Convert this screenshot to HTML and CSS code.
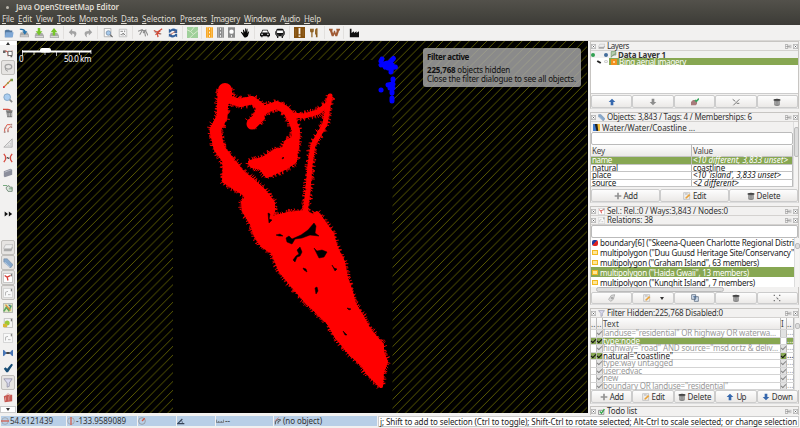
FILE: index.html
```html
<!DOCTYPE html>
<html lang="en">
<head>
<meta charset="utf-8">
<title>Java OpenStreetMap Editor</title>
<link rel="stylesheet" href="styles.css">
</head>
<body>
<svg class="sprite" xmlns="http://www.w3.org/2000/svg">
<defs>
<symbol id="open" viewBox="0 0 12 12"><path d="M1 3l2-1h3l1 1h3v8H1z" fill="#54789f"/><path d="M2 5h9.500l-1 6H1z" fill="#7fa8d6"/></symbol>
<symbol id="save" viewBox="0 0 12 12"><path d="M2 5h8l2 3v3H1V8z" fill="#aaa"/><path d="M2 9h9v1H2z" fill="#e8e8e8"/><path d="M1 1q6-1 7 3h2L7 8 4 4h2Q5 2 1 2z" fill="#2774ad"/></symbol>
<symbol id="down" viewBox="0 0 12 12"><path d="M2 6h8l2 3v3H1V9z" fill="#aaa"/><path d="M2 10h9v1H2z" fill="#eee"/><path d="M4.500 0h3v4H10L6 9 2 4h2.500z" fill="#77c52b"/></symbol>
<symbol id="up" viewBox="0 0 12 12"><path d="M2 6h8l2 3v3H1V9z" fill="#aaa"/><path d="M2 10h9v1H2z" fill="#eee"/><path d="M4.500 9h3V5H10L6 0 2 5h2.500z" fill="#77c52b"/></symbol>
<symbol id="undo" viewBox="0 0 12 12"><path d="M1 5l4-4v2.500q6 0 5 4-.5 3-3 4 2-5-2-5V9z" fill="#a3a3a3"/></symbol>
<symbol id="redo" viewBox="0 0 12 12"><path d="M11 5L7 1v2.500q-6 0-5 4 .5 3 3 4-2-5 2-5V9z" fill="#a3a3a3"/></symbol>
<symbol id="find" viewBox="0 0 12 12"><path d="M1.500.5h8v10h-8z" fill="#f9f9f9" stroke="#aaa"/><circle cx="6.500" cy="6" r="2.700" fill="#a6c8e9" stroke="#7892ad"/><path d="M8.500 8l3 3" stroke="#666" stroke-width="1.500"/></symbol>
<symbol id="prefs" viewBox="0 0 12 12"><path d="M1.500 1.500h9v9h-9z" fill="#f8f8f8" stroke="#bbb"/><path d="M3 4h3M8 3v2M3 8h2l1-2 3 3M8 7l-2 2" stroke="#777" fill="none"/></symbol>
<symbol id="ways" viewBox="0 0 12 12"><path d="M0 4l5-2 3 3 1 5M2 8l3-5 4 0 3 6M6 6l4-4" stroke="#8d8d8d" fill="none" stroke-width="1.300"/></symbol>
<symbol id="redways" viewBox="0 0 12 12"><path d="M1 3l4 2 1 6M5 5l6-4M3 8l6-5M5 6l4 1" stroke="#cf4b38" fill="none" stroke-width="1.500"/><path d="M2 5h2M8 7h2" stroke="#777"/></symbol>
<symbol id="sync" viewBox="0 0 12 12"><path d="M1 6V1l2 1q4-3 7 0l1-1v5H7l1-2q-3-2-5 1zM11 7v4l-2-1q-4 3-7 0l-1 1V7h4L4 8q3 2 5-1z" fill="#315f9c"/><path d="M3 8l6-4" stroke="#d46b52"/></symbol>
<symbol id="mapicon" viewBox="0 0 12 12"><path d="M0 0h12v12H0z" fill="#9fd09a"/><path d="M0 3l4 2 4-5M4 5l3 3 5-4M7 8l-4 4" stroke="#dcebd0" stroke-width="1" fill="none"/></symbol>
<symbol id="road" viewBox="0 0 8 12"><path d="M0 0h8v12H0z" fill="currentColor"/><path d="M1.500 0v12M6.500 0v12" stroke="#fff" stroke-opacity=".5" stroke-width=".7"/><path d="M4 1v2M4 5v2M4 9v2" stroke="#fff" stroke-width="1"/></symbol>
<symbol id="roaddot" viewBox="0 0 8 12"><path d="M0 0h8v12H0z" fill="#8c8c8c"/><circle cx="4" cy="5" r="2.500" fill="#fff"/><path d="M4 9v2" stroke="#fff"/></symbol>
<symbol id="hand" viewBox="0 0 12 12"><path d="M1 5l1-.5 2 2L3.500 2h1L6 5V.5h1V5l1-4h1v5l1.500-2 .5.500-1.500 5Q8 12 5 11z" fill="#080808"/></symbol>
<symbol id="car" viewBox="0 0 12 12"><path d="M3 2h6l1.500 3.500L12 7v3h-1.500v1H9v-1H3v1H1.500v-1H0V7l1.500-1.500z" fill="#111"/><path d="M3.500 3h5l1 2.500h-7zM1.500 7h2v1h-2zM8.500 7h2v1h-2z" fill="#fff"/></symbol>
<symbol id="bus" viewBox="0 0 12 12"><path d="M3 1h6l1.500 1v8H9.500v2H8v-2H4v2H2.500v-2h-1V2z" fill="#111"/><path d="M2.500 3h7v3h-7zM3 8h1v1H3zM8 8h1v1H8z" fill="#fff"/><path d="M0 4h1v4H0zM11 4h1v4h-1z" fill="#333"/></symbol>
<symbol id="info" viewBox="0 0 12 12"><path d="M0 0h12v12H0z" fill="#84500e"/><path d="M5 1h2v7H5zM5 9h2v2H5zM2 2v8M10 2v8" fill="#fff" stroke="#b68b52" stroke-width=".4"/></symbol>
<symbol id="fork" viewBox="0 0 12 12"><path d="M2 1v3q0 1 1.500 1T5 4V1M3.500 1v10M9 11V7H8V3q0-2 1.500-2V11" stroke="#8b5c1d" stroke-width="1.400" fill="none"/></symbol>
<symbol id="castle" viewBox="0 0 12 12"><path d="M0 2h4v1.500L3.500 4 4.500 7 5.500 4h1L7.500 7l1-3L8 3.500V2h4v1.500l-1 .5-2 6H7L6 7.500 5 10H3L1 4 0 3.500z" fill="#a05a34"/></symbol>
<symbol id="factory" viewBox="0 0 12 12"><path d="M1 1h2v5l3-2v2l3-2v2l3-2v7H1z" fill="#111"/></symbol>
<symbol id="select" viewBox="0 0 12 12"><path d="M1 5q3-3 5 0t5-2M2 3l4 2v5" stroke="#d35c4e" fill="none"/><path d="M6 4h5v5H6z" fill="#fff" stroke="#555"/><path d="M0 3h3v3H0zM9 9h2v2H9z" fill="#666"/></symbol>
<symbol id="lasso" viewBox="0 0 12 12"><ellipse cx="6.500" cy="4.500" rx="4" ry="2.800" fill="none" stroke="#a2a2a2" stroke-width="1.500"/><path d="M3 6q-1 3 3 4" stroke="#999" fill="none"/></symbol>
<symbol id="draw" viewBox="0 0 12 12"><path d="M1 11l9-9" stroke="#d27b30" stroke-width="1.500"/><path d="M9 1h3v3H9zM5 5h2v2H5z" fill="#7d9d47"/><path d="M0 10h2v2H0z" fill="#d34"/></symbol>
<symbol id="lens" viewBox="0 0 12 12"><circle cx="5" cy="5" r="4" fill="#a9cdf0" stroke="#7c9fbf"/><path d="M8 8l3 3" stroke="#8a8a8a" stroke-width="2"/></symbol>
<symbol id="datalayer" viewBox="0 0 12 12"><path d="M2 1h8v6H5l-3 4z" fill="#b5cfae" stroke="#5d8a56"/><path d="M4 9l5-5" stroke="#666"/></symbol>
<symbol id="delete" viewBox="0 0 12 12"><path d="M0 1.500h6l3 1" stroke="#d54c3d" stroke-width="1.500"/><path d="M4 4h7v7H5z" fill="#777"/><path d="M3.500 3.500h8" stroke="#444"/><path d="M6 6v4M8 6v4M10 6v4" stroke="#ccc"/></symbol>
<symbol id="parallel" viewBox="0 0 12 12"><path d="M2 11V7l3-5h4M6 10V7l3-3" stroke="#da5a49" fill="none" stroke-width="1.200"/><path d="M1 10h2v2H1zM9 1h2v2H9zM9 4h2v2H9zM5 9h2v2H5zM2 5h2v2H2z" fill="#b08f8b"/></symbol>
<symbol id="triangle" viewBox="0 0 12 12"><path d="M1 11L11 1v10z" fill="#e4e4e4" stroke="#aaa"/><path d="M6 9l3-3v3z" fill="#fff" stroke="#bbb" stroke-width=".6"/></symbol>
<symbol id="merge" viewBox="0 0 12 12"><path d="M1 1l2 3v4l-2 3M11 1L9 4v4l2 3" stroke="#d74b40" fill="none" stroke-width="1.500"/><path d="M4 6h4M5 5l2 2" stroke="#333"/></symbol>
<symbol id="extrude" viewBox="0 0 12 12"><path d="M1 4l8-3 2 1v6l-9 3-1-1z" fill="#8b8e9b"/><path d="M2 5l8-3" stroke="#c0c3cd"/></symbol>
<symbol id="improve" viewBox="0 0 12 12"><path d="M4 5l3-2 1 2h3v5H6L4 7z" fill="#e0e8e2" stroke="#66806b"/><path d="M0 3h5M7 7h4" stroke="#5d9c68"/></symbol>
<symbol id="more" viewBox="0 0 12 12"><path d="M2 3l4 3-4 3zM7 3l4 3-4 3z" fill="#111"/></symbol>
<symbol id="layers" viewBox="0 0 12 12"><path d="M1 8l2-3h9l-2 5H1z" fill="#aaa"/><path d="M1 6l2-4h9l-2 5H1z" fill="#eee" stroke="#aaa" stroke-width=".7"/></symbol>
<symbol id="tag" viewBox="0 0 12 12"><path d="M1 1h4l7 7-3 4L1 5z" fill="#87a8cb" stroke="#657d98" stroke-width=".6"/><path d="M2 5l6 6" stroke="#dce7f3"/></symbol>
<symbol id="winred" viewBox="0 0 12 12"><path d="M.5.5h11v11H.5z" fill="#fff" stroke="#bbb"/><path d="M2 3l3 2 1 4M5 5l4-2" stroke="#d63c35" fill="none" stroke-width="1.500"/><path d="M10 1v3" stroke="#444"/></symbol>
<symbol id="wingrey" viewBox="0 0 12 12"><path d="M.5.5h11v11H.5z" fill="#f8f8f8" stroke="#ccc"/><path d="M3 9V5l3-1M6 8h3" stroke="#aaa" fill="none"/><path d="M10 1v3" stroke="#555"/></symbol>
<symbol id="mappaint" viewBox="0 0 12 12"><path d="M.5.5h11v11H.5z" fill="#dfe7c0" stroke="#aaa"/><path d="M1 10l3-5 3 4 3-6" stroke="#5aa55c" stroke-width="2" fill="none"/><path d="M3 2l6 7" stroke="#df8b38" stroke-width="1.500"/><path d="M6 2h3v3z" fill="#386999"/></symbol>
<symbol id="wingreen" viewBox="0 0 12 12"><path d="M1.500.5h10v11h-10z" fill="#f4f4f4" stroke="#bbb"/><circle cx="5" cy="6" r="3" fill="#9ac935"/><path d="M0 7h5v4H0z" fill="#d7b733"/><path d="M10 1v3" stroke="#444"/></symbol>
<symbol id="conflict" viewBox="0 0 12 12"><path d="M0 2l5 4-5 4zM12 2L7 6l5 4z" fill="#4877b7"/><path d="M0 3h2v6H0zM10 3h2v6h-2z" fill="#4877b7"/><path d="M4 6h4" stroke="#222" stroke-width="2"/></symbol>
<symbol id="check" viewBox="0 0 12 12"><path d="M1 7l2-2 2 2 5-6 2 1-6 9H4z" fill="#164d75"/></symbol>
<symbol id="funnel" viewBox="0 0 12 12"><path d="M1 1h10L7.500 6v4L5 11V6z" fill="#dadaf0" stroke="#9292a6"/></symbol>
<symbol id="todo" viewBox="0 0 12 12"><path d="M1 4l4-2h6v8l-9 1z" fill="#c65952"/><path d="M4 3q1-3 3-2t1 3M3 5v4M7 4v5" stroke="#dea29c" fill="none"/></symbol>
<symbol id="todolist" viewBox="0 0 12 12"><path d="M1 4h9v7H1z" fill="#fff" stroke="#555"/><path d="M3 6l3 3 5-7" stroke="#39a64e" stroke-width="2.500" fill="none"/></symbol>
<symbol id="arrowup" viewBox="0 0 12 12"><path d="M6 1l5 5H8v5H4V6H1z" fill="currentColor"/></symbol>
<symbol id="arrowdown" viewBox="0 0 12 12"><path d="M6 11l5-5H8V1H4v5H1z" fill="currentColor"/></symbol>
<symbol id="activate" viewBox="0 0 12 12"><path d="M0 6l3-3h6v6l-2 2H0z" fill="#a77b7b"/><path d="M6 3l2 2 4-4" stroke="#39a65e" stroke-width="2.500" fill="none"/></symbol>
<symbol id="hide" viewBox="0 0 12 12"><path d="M1 2l4 3M2 11l9-9M7 8h4" stroke="#777" stroke-width="1.500" fill="none"/></symbol>
<symbol id="trash" viewBox="0 0 12 12"><path d="M2 3h8v8q-4 2-8 0z" fill="#777"/><path d="M1 2q5-2 10 0v2H1z" fill="#444"/><path d="M4 5v5M6 5v6M8 5v5" stroke="#c5c5c5"/></symbol>
<symbol id="plus" viewBox="0 0 12 12"><path d="M6 1v10M1 6h10" stroke="#929292" stroke-width="2.500"/></symbol>
<symbol id="edit" viewBox="0 0 12 12"><path d="M1 1h9v10H1z" fill="#eee" stroke="#999" stroke-width=".7"/><path d="M3 9l6-6 2 2-6 5z" fill="#e8a23b"/><path d="M3 3h4" stroke="#999"/></symbol>
<symbol id="copy" viewBox="0 0 12 12"><path d="M1 1h6v7H1zM5 4h6v7H5z" fill="#d7e3f1" stroke="#42556b"/><path d="M3 4h4v3" stroke="#456b98" fill="none"/></symbol>
<symbol id="newrel" viewBox="0 0 12 12"><path d="M1 8l4-6 5-1-2 7-4 3z" fill="#ddd" stroke="#999"/><circle cx="6" cy="6" r="2" fill="#aaa"/></symbol>
<symbol id="selrel" viewBox="0 0 12 12"><path d="M1 1h2v2H1zM9 1h2v2H9zM1 9h2v2H1zM9 9h2v2H9zM5 4l4 4H6z" fill="#777"/></symbol>
<symbol id="pin" viewBox="0 0 12 8"><path d="M.5.5h4v7h-4zM1 4h7M7 1v6M10 1v6" fill="none" stroke="#888"/></symbol>
<symbol id="close" viewBox="0 0 8 8"><path d="M.5.5h7v7h-7z" fill="#fff" stroke="#888"/><path d="M2.500 2.500l3 3M5.500 2.500l-3 3" stroke="#444"/></symbol>
<symbol id="lat" viewBox="0 0 12 12"><circle cx="6" cy="6" r="5" fill="none" stroke="#999"/><path d="M0 6h12" stroke="#d75745" stroke-width="1.800"/></symbol>
<symbol id="lon" viewBox="0 0 12 12"><circle cx="6" cy="6" r="5" fill="none" stroke="#999"/><path d="M6 0v12" stroke="#d75745" stroke-width="1.800"/></symbol>
<symbol id="head" viewBox="0 0 12 12"><circle cx="6" cy="6" r="5" fill="none" stroke="#888"/><path d="M6 6l4-4" stroke="#d75745" stroke-width="2"/></symbol>
<symbol id="angle" viewBox="0 0 12 12"><path d="M11 10H1l7-7" stroke="#37465a" stroke-width="1.800" fill="none"/><path d="M6 5q3 2 2 5" stroke="#37465a" fill="none"/></symbol>
<symbol id="ruler" viewBox="0 0 12 6"><path d="M.5 1v4h11V1M4 3v2M8 3v2" stroke="#555" fill="none"/></symbol>
<symbol id="object" viewBox="0 0 12 12"><path d="M2 11V7l4-3h4M6 10V7l4-2" stroke="#555" fill="none" stroke-width="1.500"/><path d="M1 6l6-5" stroke="#d75745"/></symbol>
</defs>
</svg>
<div class="window">
  <header class="titlebar"><i class="windot"></i><span data-w="103">Java OpenStreetMap Editor</span></header>
  <nav class="menubar">
    <span data-w="12"><u>F</u>ile</span><span data-w="14"><u>E</u>dit</span><span data-w="17"><u>V</u>iew</span><span data-w="18"><u>T</u>ools</span><span data-w="38"><u>M</u>ore tools</span><span data-w="17"><u>D</u>ata</span><span data-w="34"><u>S</u>election</span><span data-w="27"><u>P</u>resets</span><span data-w="29"><u>I</u>magery</span><span data-w="32"><u>W</u>indows</span><span data-w="20">A<u>u</u>dio</span><span data-w="17"><u>H</u>elp</span>
  </nav>
  <div class="toolbar">
    <div class="group"><b><svg><use href="#open"/></svg></b><b><svg><use href="#save"/></svg></b><b><svg><use href="#down"/></svg></b><b><svg><use href="#up"/></svg></b></div>
    <div class="group"><b><svg><use href="#undo"/></svg></b><b><svg><use href="#redo"/></svg></b></div>
    <div class="group"><b><svg><use href="#find"/></svg></b><b><svg><use href="#prefs"/></svg></b></div>
    <div class="group"><b><svg><use href="#ways"/></svg></b><b><svg><use href="#redways"/></svg></b><b><svg><use href="#sync"/></svg></b></div>
    <div class="group"><b><svg class="big"><use href="#mapicon"/></svg></b></div>
    <div class="group"><b class="slim orange"><svg><use href="#road"/></svg></b><b class="slim grey"><svg><use href="#road"/></svg></b><b class="slim"><svg><use href="#roaddot"/></svg></b><b><svg><use href="#hand"/></svg></b></div>
    <div class="group"><b><svg><use href="#car"/></svg></b><b><svg><use href="#bus"/></svg></b></div>
    <div class="group"><b><svg class="big"><use href="#info"/></svg></b><b><svg><use href="#fork"/></svg></b></div>
    <div class="group"><b><svg class="big"><use href="#castle"/></svg></b></div>
    <div class="group"><b><svg><use href="#factory"/></svg></b></div>
  </div>
  <main class="workspace">
    <aside class="sidebar">
      <div class="scroll"><i class="tri-up"></i></div>
      <b><svg><use href="#select"/></svg></b><b class="on"><svg><use href="#lasso"/></svg></b><b><svg><use href="#draw"/></svg></b><b><svg><use href="#lens"/></svg></b><b><svg><use href="#delete"/></svg></b><b><svg><use href="#parallel"/></svg></b><b><svg><use href="#triangle"/></svg></b><b><svg><use href="#merge"/></svg></b><b><svg><use href="#extrude"/></svg></b><b><svg><use href="#improve"/></svg></b>
      <b class="expand"><svg><use href="#more"/></svg></b>
      <b class="on"><svg><use href="#layers"/></svg></b><b class="on"><svg><use href="#tag"/></svg></b><b class="on"><svg><use href="#winred"/></svg></b><b class="on"><svg><use href="#wingrey"/></svg></b><b><svg><use href="#mappaint"/></svg></b><b><svg><use href="#wingreen"/></svg></b><b><svg><use href="#wingrey"/></svg></b><b><svg><use href="#conflict"/></svg></b><b><svg><use href="#check"/></svg></b><b class="on"><svg><use href="#funnel"/></svg></b><b><svg><use href="#todo"/></svg></b>
      <div class="scroll last"><i class="tri-down"></i></div>
    </aside>
    <section class="map">
      <svg class="canvas" viewBox="17 41 570 372">
        <defs>
          <pattern id="hatch" width="8.8" height="8.8" patternUnits="userSpaceOnUse"><path d="M-1 9.800L9.800-1M-1 1L1-1M7.800 9.800l2-2" stroke="#6a6a04" stroke-width=".85"/></pattern>
        </defs>
        <path d="M17 41h570v372H17z" fill="#000"/>
        <path d="M17 41h570v372H17z" fill="url(#hatch)"/>
        <path d="M173 60h219.500v353H173z" fill="#000"/>
        <g id="coast" class="coast">
          <path class="w13" d="M225 90L225 98"/>
          <path class="w9" d="M223 95L222 117L215 130L219 148L228 160L233 172"/>
          <path class="w7" d="M228 99L240 103L252 100L261 107L257 118"/>
          <path class="w9" d="M259 117L252 124"/>
          <path class="w7" d="M257 117L266 109L277 105L286 110L292 119L296 131L295 148"/>
          <path class="w5" d="M290 115L304 116L318 112L328 104"/>
          <path class="w5" d="M330 96L328 106L325 124L313 145L310 165L308 190L305 214"/>
          <path class="area" d="M250 162L263 159L275 151L284 149L286 142L294 138L296 150L295 161L285 168L267 176L261 168L252 166Z"/>
          <path class="area" d="M225 160L235 163L242 172L252 180L264 191L273 203L273 212L269 219L276 217L288 214L305 212L314 217L317 213L322 220L332 234L336 248L343 262L346 278L351 292L354 304L361 315L369 330L382 345L382 352L386 362L382 372L381 386L368 373L363 365L350 353L336 336L329 323L305 300L292 285L280 270L273 252L263 246L256 236L252 224L244 211L243 202L248 196L235 188L224 181Z"/>
        </g>
        <g class="water">
          <path d="M286 238l3-2 3 3 9-4 7-5 6-7 2 3-1 7 4 3-9-1-8 3-7 1-3 5-5-2z"/>
          <path d="M276 235l4-1 3 2-4 0zM300 247l2 5-2 4-3 1-2 5-2-2 3-4 3-2-2-4zM314 248l3 3 5-1 5 2-3 5-5 1zM303 268l3 1 1 3-3-2zM315 288l2-1 1 4-2 3zM332 265l2 3 3 1-2 2zM343 331l2 2 2 2-2 0zM347 308l4 1-2 1zM283 157l1 1-2 1zM268 213l2 1-1 5 3 1-3 3z"/>
        </g>
        <g class="islands"><path d="M381 61l1-2M381 65l6-2M385 67l9-9M388 68l8-1M392 65l-1 7M393 79v1M388 85l5-1M390 88h3M381 90h.1M392 92v1M392 98v3"/></g>
        <g class="scalebar"><path d="M22 51.500h69" stroke-width="2"/><path d="M22.500 50v6M91 50v4M34 52v3M45 52v3M56.500 52v4M68 52v3M79.500 52v3" stroke-width=".7"/><rect x="40" y="48" width="11" height="4.500" rx="2" fill="#fff" stroke="none"/></g>
      </svg>
      <div class="scale"><span>0</span><span data-w="27">50.0 km</span></div>
      <div class="notice"><strong data-w="42">Filter active</strong><p><span data-w="83"><strong>225,768</strong> objects hidden</span></p><p><span data-w="149">Close the filter dialogue to see all objects.</span></p></div>
    </section>
    <aside class="panels">
      <section class="panel layers">
        <h2><svg class="fold"><use href="#close"/></svg><svg><use href="#layers"/></svg><span data-w="22">Layers</span><em><svg class="pin"><use href="#pin"/></svg><svg class="fold"><use href="#close"/></svg></em></h2>
        <div class="list">
          <div class="layer"><i class="dot green"></i><i class="dot eye"></i><svg><use href="#datalayer"/></svg><strong data-w="48">Data Layer 1</strong></div>
          <div class="layer current"><span class="gut"><i class="mark"></i><i class="oval"></i></span><i class="orangebox"></i><span data-w="67">Bing aerial imagery</span></div>
        </div>
        <div class="buttons"><b class="blue"><svg><use href="#arrowup"/></svg></b><b class="grey"><svg><use href="#arrowdown"/></svg></b><b><svg><use href="#activate"/></svg></b><b><svg><use href="#hide"/></svg></b><b><svg><use href="#trash"/></svg></b></div>
      </section>
      <section class="panel tags">
        <h2><svg class="fold"><use href="#close"/></svg><svg><use href="#tag"/></svg><span data-w="145">Objects: 3,843 / Tags: 4 / Memberships: 6</span><em><svg class="pin"><use href="#pin"/></svg><svg class="fold"><use href="#close"/></svg></em></h2>
        <div class="scrollrow"><div class="fill">
          <div class="preset"><svg viewBox="0 0 8 8"><path d="M0 0h8v8H0z" fill="#222"/><path d="M0 0h2l2 8H0z" fill="#3b78cc"/><path d="M5 0h3v8H6z" fill="#f2bd35"/></svg><span data-w="93">Water/Water/Coastline ...</span></div>
          <div class="input"></div>
          <div class="row head"><span><i data-w="13">Key</i></span><span><i data-w="20">Value</i></span></div>
          <div class="row sel"><span><i data-w="20">name</i></span><span class="it"><i data-w="95">&lt;10 different, 3,833 unset&gt;</i></span></div>
          <div class="row"><span><i data-w="26">natural</i></span><span><i data-w="32">coastline</i></span></div>
          <div class="row"><span><i data-w="19">place</i></span><span class="it"><i data-w="88">&lt;10 'island', 3,833 unset&gt;</i></span></div>
          <div class="row"><span><i data-w="24">source</i></span><span class="it"><i data-w="46">&lt;2 different&gt;</i></span></div>
        </div><div class="bar"><i class="thumb"></i></div></div>
        <div class="buttons"><b><svg><use href="#plus"/></svg><span data-w="14">Add</span></b><b><svg><use href="#edit"/></svg><span data-w="13">Edit</span></b><b><svg><use href="#trash"/></svg><span data-w="24">Delete</span></b></div>
      </section>
      <section class="panel relations">
        <h2><svg class="fold"><use href="#close"/></svg><svg><use href="#winred"/></svg><span data-w="121">Sel.: Rel.:0 / Ways:3,843 / Nodes:0</span><em><svg class="pin"><use href="#pin"/></svg><svg class="fold"><use href="#close"/></svg></em></h2>
        <h2><svg class="fold"><use href="#close"/></svg><svg><use href="#wingrey"/></svg><span data-w="46">Relations: 38</span><em><svg class="pin"><use href="#pin"/></svg><svg class="fold"><use href="#close"/></svg></em></h2>
        <div class="input"></div>
        <div class="scrollrow"><div class="fill">
          <div class="rel"><i class="bound"></i><span data-w="194">boundary[6] ("Skeena-Queen Charlotte Regional Distri</span></div>
          <div class="rel"><i class="multi"></i><span data-w="194">multipolygon ("Duu Guusd Heritage Site/Conservancy"</span></div>
          <div class="rel"><i class="multi"></i><span data-w="159">multipolygon ("Graham Island", 63 members)</span></div>
          <div class="rel sel"><i class="multi"></i><span data-w="149">multipolygon ("Haida Gwaii", 13 members)</span></div>
          <div class="rel"><i class="multi"></i><span data-w="155">multipolygon ("Kunghit Island", 7 members)</span></div>
        </div><div class="bar"><i class="thumb"></i></div></div>
        <div class="hbar"><i></i></div>
        <div class="buttons"><b><svg><use href="#newrel"/></svg></b><b class="drop"><svg><use href="#edit"/></svg><i class="tri-down"></i></b><b><svg><use href="#copy"/></svg></b><b><svg><use href="#trash"/></svg></b><b><svg><use href="#selrel"/></svg></b></div>
      </section>
      <section class="panel filter">
        <h2><svg class="fold"><use href="#close"/></svg><svg><use href="#funnel"/></svg><span data-w="116">Filter Hidden:225,768 Disabled:0</span><em><svg class="pin"><use href="#pin"/></svg><svg class="fold"><use href="#close"/></svg></em></h2>
        <div class="scrollrow"><div class="fill">
          <div class="frow head"><i>..</i><i>..</i><span><i data-w="16">Text</i></span><i>I</i><i>..</i></div>
          <div class="frow"><i></i><i class="t"></i><span><i data-w="173">landuse="residential" OR highway OR waterwa...</i></span><i class="g"></i><i class="e">...</i></div>
          <div class="frow sel"><i class="t"></i><i class="t"></i><span><i data-w="37">type:node</i></span><i class="w"></i><i class="e">...</i></div>
          <div class="frow"><i></i><i class="t"></i><span><i data-w="175">highway="road" AND source="msd.or.tz &amp; deliv...</i></span><i class="g t"></i><i class="e">...</i></div>
          <div class="frow active"><i class="t"></i><i class="t"></i><span><i data-w="70">natural="coastline"</i></span><i class="t"></i><i class="e">...</i></div>
          <div class="frow"><i></i><i class="t"></i><span><i data-w="70">type:way untagged</i></span><i class="g t"></i><i class="e">...</i></div>
          <div class="frow"><i></i><i class="t"></i><span><i data-w="39">user:edvac</i></span><i class="g t"></i><i class="e">...</i></div>
          <div class="frow"><i></i><i class="t"></i><span><i data-w="15">new</i></span><i class="g t"></i><i class="e">...</i></div>
          <div class="frow"><i></i><i class="t"></i><span><i data-w="125">boundary OR landuse="residential"</i></span><i class="g t"></i><i class="e">...</i></div>
        </div><div class="bar"><i class="thumb"></i></div></div>
        <div class="buttons"><b><svg><use href="#plus"/></svg><span data-w="14">Add</span></b><b><svg><use href="#edit"/></svg><span data-w="13">Edit</span></b><b><svg><use href="#trash"/></svg><span data-w="24">Delete</span></b><b class="blue"><svg><use href="#arrowup"/></svg><span data-w="9">Up</span></b><b class="blue"><svg><use href="#arrowdown"/></svg><span data-w="21">Down</span></b></div>
      </section>
      <section class="panel todo">
        <h2><svg class="fold"><use href="#close"/></svg><svg><use href="#todolist"/></svg><span data-w="30">Todo list</span><em><svg class="pin"><use href="#pin"/></svg><svg class="fold"><use href="#close"/></svg></em></h2>
      </section>
    </aside>
  </main>
  <footer class="status">
    <div class="f1"><svg><use href="#lat"/></svg><span data-w="43">54.6121439</span></div>
    <div class="f2"><svg><use href="#lon"/></svg><span data-w="50">-133.9589089</span></div>
    <div class="f3"><svg><use href="#head"/></svg></div>
    <div class="f4"><svg><use href="#angle"/></svg></div>
    <div class="f5"><svg><use href="#ruler"/></svg><span data-w="5">--</span></div>
    <div class="f6"><svg><use href="#object"/></svg><span data-w="39">(no object)</span></div>
    <div class="hint"><span data-w="417">j; Shift to add to selection (Ctrl to toggle); Shift-Ctrl to rotate selected; Alt-Ctrl to scale selected; or change selection</span></div>
  </footer>
</div>
<script src="script.js"></script>
</body>
</html>
```
FILE: styles.css
```css
* { box-sizing: border-box; }
body { margin: 0; width: 800px; height: 428px; overflow: hidden; font-family: "Noto Sans", sans-serif; font-size: 8px; line-height: 10px; color: #333; background: #f2f1f0; }
b, i, em { font-weight: normal; font-style: normal; }
h2, p { margin: 0; font-size: inherit; font-weight: normal; }
svg { display: block; flex: none; width: 10px; height: 10px; }
span, [data-w] { white-space: nowrap; }
.sprite { display: none; }
.window { display: flex; flex-direction: column; width: 800px; height: 428px; }

.titlebar { display: flex; align-items: center; height: 13px; padding: 1px 0 0 6px; gap: 7px; background: linear-gradient(#53514b, #474640); color: #dfdbd2; font-weight: 600; }
.windot { width: 3px; height: 3px; border-radius: 50%; background: #bbb7ad; }
.menubar { display: flex; align-items: center; gap: 4px; height: 12px; padding-left: 2px; background: linear-gradient(#474640, #3c3b37); color: #dfdbd2; }
.menubar u { text-underline-offset: 1px; text-decoration-thickness: 1px; }

.toolbar { display: flex; align-items: center; height: 16px; background: #f2f1f0; border-bottom: 1px solid #d9d7d5; }
.group { display: flex; flex: none; height: 13px; align-items: center; padding-left: 2px; margin-right: 1.7px; border-left: 1px solid #e2e0de; }
.group:first-child { padding-left: 0; border-color: transparent; }
.group b { display: flex; justify-content: center; width: 15px; }
.group .slim { width: 11px; }
.group .slim svg { width: 7px; height: 11px; }
.group .big { width: 11px; height: 11px; }
.orange { color: #f7a51d; }
.grey { color: #8c8c8c; }
.blue svg { color: #3567ad; }

.workspace { display: flex; height: 373px; }
.sidebar { display: flex; flex-direction: column; width: 17px; padding-right: 1px; background: #f2f1f0; }
.sidebar b { display: flex; flex: none; align-items: center; justify-content: center; height: 15px; margin: 0 1px; }
.sidebar b.on { border: 1px solid #c0bebb; border-radius: 2px; background: #e6e4e2; }
.sidebar b.expand { height: 45px; padding-bottom: 8px; }
.scroll { display: flex; flex: none; align-items: center; justify-content: center; height: 4px; background: #fff; }
.scroll.last { height: 7px; margin-top: 1px; border: 1px solid #ccc; }
.tri-up, .tri-down { border: 2px solid transparent; border-top-width: 0; border-bottom: 3px solid #333; }
.tri-down { border-top: 3px solid #333; border-bottom: 0; }

.map { position: relative; width: 571px; height: 372px; background: #000; }
.canvas { width: 570px; height: 372px; }
.coast { fill: none; stroke: #f00; stroke-linejoin: round; stroke-linecap: round; }
.area { fill: #f00; stroke-width: 4px; }
.w13 { stroke-width: 14px; }
.w9 { stroke-width: 11px; }
.w7 { stroke-width: 8px; }
.w5 { stroke-width: 5px; }
.spike { fill: none; stroke: #f00; stroke-width: .9px; stroke-linecap: butt; }
.water { fill: #000; stroke: #000; stroke-width: .5px; }
.islands { stroke: #00f; stroke-width: 5px; stroke-linecap: round; stroke-dasharray: 3 1.500; }
.scalebar { fill: none; stroke: #fff; }
.scale { position: absolute; left: 2px; top: 13px; display: flex; justify-content: space-between; width: 72px; color: #fff; }
.notice { position: absolute; left: 406px; top: 7px; width: 158px; height: 39px; padding: 4px 4px; border-radius: 3px; background: rgba(172, 172, 172, .8); color: #111; line-height: 9px; }
.notice > strong { display: block; width: max-content; line-height: 10px; margin-bottom: 3px; }

.panels { display: flex; flex-direction: column; gap: 3px; width: 212px; padding: 0 1px 0 2px; }
.panel { display: flex; flex-direction: column; flex: none; border: 1px solid #c7c5c2; border-bottom-color: #ddd; background: #f2f1f0; }
.layers { height: 68px; }
.tags { height: 91px; }
.relations { height: 99px; }
.filter { height: 96px; }
.todo { height: 9px; margin-top: -1px; border-bottom: 0; }
.panel h2 { display: flex; flex: none; align-items: center; gap: 1px; height: 9px; line-height: 8px; border-bottom: 1px solid #d4d2d0; }
.panel.todo h2 { height: 8px; border-bottom: 0; }
.panel h2 > svg { width: 7px; height: 7px; margin-right: 1px; }
.panel h2 .fold { width: 5px; height: 5px; }
.panel h2 em { display: flex; gap: 1px; margin-left: auto; }
.panel h2 .pin { width: 7px; height: 5px; }
.list { height: 43px; background: #fff; border-bottom: 1px solid #ccc; }
.layer { display: flex; align-items: center; gap: 1px; height: 7px; line-height: 7px; background: #f1f1f1; }
.layer svg { width: 7px; height: 7px; margin-left: 1px; }
.dot { width: 4px; height: 4px; border-radius: 50%; }
.green { background: #32a153; }
.eye { margin-left: 8px; background: #446d9b; }
.current { gap: 2px; background: #87a752; color: #fff; }
.gut { display: flex; align-items: center; gap: 3px; width: 18px; height: 7px; padding-left: 6px; background: #fff; }
.mark { width: 4px; height: 2px; background: #222; transform: rotate(30deg); }
.oval { width: 4px; height: 3px; border: 1px solid #ccc; border-radius: 50%; }
.orangebox { width: 6px; height: 6px; border: 2px solid #f1901f; background: #ffd391; }
.buttons { display: flex; flex: none; height: 13px; margin-top: auto; }
.buttons b { display: flex; flex: 1; align-items: center; justify-content: center; gap: 2px; border: 1px solid #ccc; border-radius: 2px; background: linear-gradient(#fdfdfd, #ebe9e7); }
.buttons svg { width: 8px; height: 8px; }
.buttons span { line-height: 10px; }
.drop .tri-down { margin-left: 7px; }
.scrollrow { display: flex; min-height: 0; }
.fill { width: 203px; background: #fff; }
.bar { width: 5px; padding-top: 5px; background: #f5f4f3; border-left: 1px solid #ddd; }
.thumb { display: block; width: 5px; height: 30px; border: 1px solid #bbb; border-radius: 2px; background: #ddd; }
.relations .thumb, .filter .thumb { height: 6px; }
.preset { display: flex; align-items: center; gap: 2px; height: 10px; line-height: 9px; padding-left: 2px; background: #f2f1f0; }
.preset svg { width: 7px; height: 7px; }
.input { flex: none; height: 13px; border: 1px solid #bbb; border-radius: 2px; background: #fff; }
.row { display: grid; grid-template-columns: 101px 1fr; height: 7.5px; line-height: 6.5px; border-bottom: 1px solid #c4c4c4; color: #222; }
.row > span { display: block; padding-left: 1px; border-right: 1px solid #bbb; }
.row.head, .frow.head { height: 12px; line-height: 11px; background: linear-gradient(#fdfdfd, #ebe9e7); color: #444; }
.row .it i { font-style: italic; }
.row.sel, .rel.sel, .frow.sel { background: #87a752; color: #fff; }
.rel { display: flex; align-items: center; gap: 2px; height: 9.8px; line-height: 9px; padding-left: 1px; color: #222; }
.multi { width: 6px; height: 5px; border: 1.5px solid #f3b91f; background: #ffe694; }
.bound { width: 6px; height: 6px; border-radius: 2px; background: linear-gradient(135deg, #223a9b 45%, #d22 46%); }
.hbar { flex: none; height: 5px; padding: 0 5px; }
.hbar i { display: block; width: 128px; height: 5px; border: 1px solid #bbb; border-radius: 3px; background: #ddd; }
.relations .buttons { height: 12px; }
.frow { display: grid; grid-template-columns: 6px 6px 178px 6px 1fr; height: 7.5px; line-height: 6.5px; border-bottom: 1px solid #d4d4d4; color: #999; }
.frow > * { border-right: 1px solid #bbb; height: 100%; }
.frow span i { display: block; width: max-content; }
.frow .e { line-height: 4px; }
.frow .t { display: flex; justify-content: center; background: #e4e4e4; }
.frow .t::after { content: ""; width: 4px; height: 2px; margin-top: 1px; border: solid #888; border-width: 0 0 1px 1px; transform: rotate(-45deg); }
.frow .g { background: #e2e2e2; }
.frow .w { background: #fff; }
.frow.active { color: #222; }
.frow.active .t, .frow.sel .t { background: #87a752; }
.frow.active .t::after, .frow.sel .t::after { border-color: #111; }

.status { display: flex; gap: 1px; height: 14px; padding: 2px 1px; color: #333; }
.status div { display: flex; flex: none; align-items: center; gap: 1px; height: 10px; background: #b8cfe7; }
.status svg { width: 8px; height: 8px; }
.f1 { width: 65px; }
.f2 { width: 70px; }
.f3 { width: 38px; }
.f4 { width: 38px; }
.f5 { width: 57px; }
.f6 { width: 103px; }
.status .hint { width: 421px; padding-left: 1px; height: 11px; line-height: 9px; border: 1px solid #ccc; background: #fff; color: #222; }
```
FILE: script.js
```js
// Tighten or loosen the tracking so each label fills its allotted width.
document.querySelectorAll('[data-w]').forEach(function (el) {
  if (getComputedStyle(el).display === 'inline') el.style.display = 'inline-block';
  el.style.width = 'max-content';
  var natural = el.getBoundingClientRect().width;
  el.style.letterSpacing = (Number(el.dataset.w) - natural) / el.textContent.length + 'px';
});

// Direction ticks along every shoreline.
var coast = document.getElementById('coast');
var seed = 7;
function rnd() { seed = (seed * 16807) % 2147483647; return seed / 2147483647; }
coast.querySelectorAll('path').forEach(function (path) {
  var reach = parseFloat(getComputedStyle(path).strokeWidth) / 2;
  var total = path.getTotalLength();
  var d = '';
  for (var s = 0; s < total; s += 1.4) {
    var a = path.getPointAtLength(s);
    var b = path.getPointAtLength(Math.min(total, s + 0.5));
    var angle = Math.atan2(b.y - a.y, b.x - a.x);
    [1, -1].forEach(function (side) {
      var t = angle + side * Math.PI / 2 + (rnd() - 0.5) * 1.1;
      var r = reach + 0.6 + rnd() * 2.8;
      d += 'M' + a.x + ' ' + a.y + 'L' + (a.x + Math.cos(t) * r) + ' ' + (a.y + Math.sin(t) * r);
    });
  }
  var tick = document.createElementNS('http://www.w3.org/2000/svg', 'path');
  tick.setAttribute('d', d);
  tick.setAttribute('class', 'spike');
  coast.appendChild(tick);
});
```
